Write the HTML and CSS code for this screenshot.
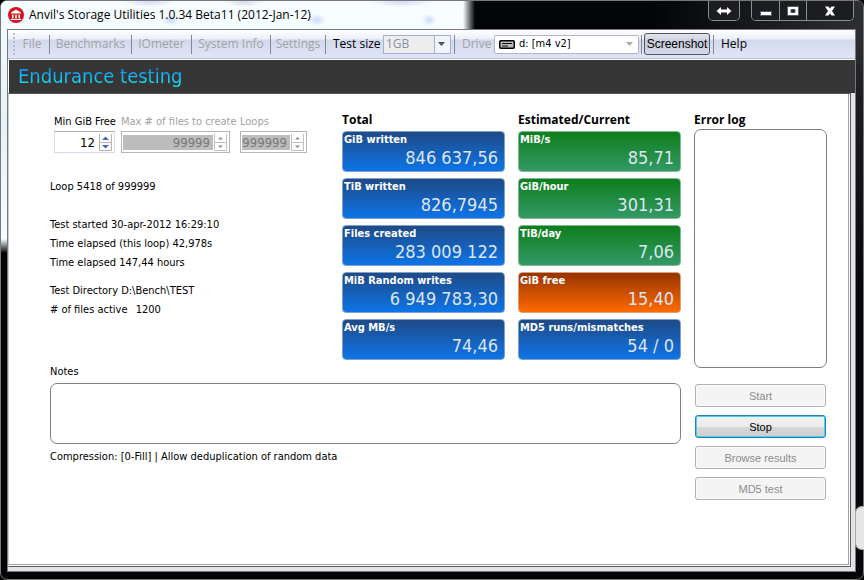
FILE: index.html
```
<!DOCTYPE html>
<html lang="en">
<head>
    <meta charset="UTF-8">
    <meta name="viewport" content="width=device-width, initial-scale=1.0">
    <title>Anvil's Storage Utilities</title>
    <link rel="stylesheet" href="styles.css">
</head>
<body>
    <div class="window">
        <header class="titlebar">
            <svg class="app-icon" width="16" height="16" viewBox="0 0 16 16">
                <circle cx="8" cy="8" r="8" fill="#d8141c"/>
                <path d="M8 2.5L13 5.5V6.5H3V5.5ZM4 7.5H5.5V11H4ZM7.2 7.5H8.8V11H7.2ZM10.5 7.5H12V11H10.5ZM3 11.7H13V13H3Z" fill="#fff"/>
            </svg>
            <h1 class="title">Anvil's Storage Utilities 1.0.34 Beta11 (2012-Jan-12)</h1>
            <div class="caption-group">
                <button class="caption-btn" aria-label="Switch monitor">
                    <svg width="16" height="10" viewBox="0 0 16 10"><path d="M0.5 5L5 1V3.5H11V1L15.5 5L11 9V6.5H5V9Z" fill="#fff"/></svg>
                </button>
            </div>
            <div class="caption-group">
                <button class="caption-btn min" aria-label="Minimize">
                    <svg width="12" height="12" viewBox="0 0 12 12"><path d="M0.5 6.5H11.5V10.5H0.5Z" fill="#fff" stroke="#555a6a"/></svg>
                </button>
                <button class="caption-btn max" aria-label="Maximize">
                    <svg width="12" height="12" viewBox="0 0 12 12"><path d="M0.5 1.5H11.5V10.5H0.5Z" fill="#fff" stroke="#555a6a"/><path d="M4 4.5H8V7.5H4Z" fill="#222" stroke="#555a6a"/></svg>
                </button>
                <button class="caption-btn close" aria-label="Close">
                    <svg width="12" height="12" viewBox="0 0 12 12"><path d="M1 1.5H4.5L6 3.5L7.5 1.5H11L8 6L11 10.5H7.5L6 8.5L4.5 10.5H1L4 6Z" fill="#fff"/></svg>
                </button>
            </div>
        </header>

        <div class="client">
            <nav class="toolbar">
                <span class="grip"></span>
                <button class="menu file" disabled>File</button>
                <button class="menu benchmarks" disabled>Benchmarks</button>
                <button class="menu iometer" disabled>IOmeter</button>
                <button class="menu sysinfo" disabled>System Info</button>
                <button class="menu settings" disabled>Settings</button>
                <div class="tool size-tool">
                    <label for="testSize">Test size</label>
                    <span class="combo combo-size">
                        <select id="testSize" disabled><option>1GB</option></select>
                        <svg class="combo-arrow" width="7" height="4" viewBox="0 0 7 4"><path d="M0 0H7L3.5 4Z" fill="#3d5277"/></svg>
                    </span>
                </div>
                <div class="tool drive-tool">
                    <label for="drive" class="dim">Drive</label>
                    <span class="combo combo-drive">
                        <svg class="drive-icon" width="16" height="9" viewBox="0 0 16 9"><rect x="0.75" y="0.75" width="14.5" height="7.5" rx="1" fill="#bbb" stroke="#000" stroke-width="1.5"/><path d="M3 3.5H13M3 6H9" stroke="#111"/></svg>
                        <select id="drive"><option>d: [m4 v2]</option></select>
                        <svg class="combo-arrow" width="7" height="4" viewBox="0 0 7 4"><path d="M0 0H7L3.5 4Z" fill="#aaa"/></svg>
                    </span>
                </div>
                <div class="tool shot-tool">
                    <button class="shot">Screenshot</button>
                </div>
                <button class="menu help">Help</button>
            </nav>

            <div class="banner"><h2>Endurance testing</h2></div>

            <main class="workspace">
                <div class="main-col">
                    <div class="top-row">
                        <section class="info">
                            <div class="fields">
                                <div class="field field-min">
                                    <label for="minFree">Min GiB Free</label>
                                    <div class="spin">
                                        <input type="number" id="minFree" value="12">
                                        <svg class="arrows" width="13" height="17" viewBox="0 0 13 17"><path d="M0.5 0V16.5H12.5V0M0 8.5H13" fill="none" stroke="#b4b4b4"/><path d="M3 6H10L6.5 2.5ZM3 11H10L6.5 14.5Z" fill="#4a62b8"/></svg>
                                    </div>
                                </div>
                                <div class="field field-max">
                                    <label for="maxFiles" class="dim">Max # of files to create</label>
                                    <div class="spin off">
                                        <input type="number" id="maxFiles" value="99999" disabled>
                                        <svg class="arrows" width="13" height="17" viewBox="0 0 13 17"><path d="M0.5 0V16.5H12.5V0M0 8.5H13" fill="none" stroke="#c0c0c0"/><path d="M4 5.5H9L6.5 3ZM4 11.5H9L6.5 14Z" fill="#8c8c8c"/></svg>
                                    </div>
                                </div>
                                <div class="field field-loops">
                                    <label for="loops" class="dim">Loops</label>
                                    <div class="spin off">
                                        <input type="number" id="loops" value="999999" disabled>
                                        <svg class="arrows" width="13" height="17" viewBox="0 0 13 17"><path d="M0.5 0V16.5H12.5V0M0 8.5H13" fill="none" stroke="#c0c0c0"/><path d="M4 5.5H9L6.5 3ZM4 11.5H9L6.5 14Z" fill="#8c8c8c"/></svg>
                                    </div>
                                </div>
                            </div>
                            <p class="loop">Loop 5418 of 999999</p>
                            <div class="lines">
                                <p>Test started 30-apr-2012 16:29:10</p>
                                <p>Time elapsed (this loop) 42,978s</p>
                                <p>Time elapsed 147,44 hours</p>
                            </div>
                            <div class="lines">
                                <p>Test Directory D:\Bench\TEST</p>
                                <p># of files active <span class="active-count">1200</span></p>
                            </div>
                        </section>

                        <section class="stats">
                            <h3>Total</h3>
                            <div class="tile blue"><span class="name">GiB written</span><span class="value">846 637,56</span></div>
                            <div class="tile blue"><span class="name">TiB written</span><span class="value">826,7945</span></div>
                            <div class="tile blue"><span class="name">Files created</span><span class="value">283 009 122</span></div>
                            <div class="tile blue"><span class="name">MiB Random writes</span><span class="value">6 949 783,30</span></div>
                            <div class="tile blue"><span class="name">Avg MB/s</span><span class="value">74,46</span></div>
                        </section>

                        <section class="stats">
                            <h3>Estimated/Current</h3>
                            <div class="tile green"><span class="name">MiB/s</span><span class="value">85,71</span></div>
                            <div class="tile green"><span class="name">GiB/hour</span><span class="value">301,31</span></div>
                            <div class="tile green"><span class="name">TiB/day</span><span class="value">7,06</span></div>
                            <div class="tile orange"><span class="name">GiB free</span><span class="value">15,40</span></div>
                            <div class="tile blue"><span class="name">MD5 runs/mismatches</span><span class="value">54 / 0</span></div>
                        </section>
                    </div>

                    <label for="notes" class="notes-label">Notes</label>
                    <textarea id="notes" class="notes"></textarea>
                    <p class="compression">Compression: [0-Fill] | Allow deduplication of random data</p>
                </div>

                <aside class="side">
                    <label for="errorLog" class="log-label">Error log</label>
                    <textarea id="errorLog" class="log" readonly></textarea>
                    <div class="actions">
                        <button class="action" disabled>Start</button>
                        <button class="action stop">Stop</button>
                        <button class="action" disabled>Browse results</button>
                        <button class="action" disabled>MD5 test</button>
                    </div>
                </aside>
            </main>
        </div>
        <span class="edge-tab"></span>
    </div>
</body>
</html>
```
FILE: styles.css
```
* {
    margin: 0;
    padding: 0;
    box-sizing: border-box;
}
body {
    font-family: "DejaVu Sans Condensed", "DejaVu Sans", sans-serif;
    font-size: 11px;
    color: #000;
    background: #000;
}
button, input, select, textarea {
    font: inherit;
    color: inherit;
}

/* window frame */
.window {
    position: relative;
    display: flex;
    flex-direction: column;
    min-height: 100vh;
    padding: 0 7px 7px 6px;
    border: 1px solid #777;
    border-radius: 7px;
    background:
        linear-gradient(#f4fdff 0, #e4f2fb 120px, #f4fdff 238px, #030406 252px) left / 6px 100% no-repeat,
        linear-gradient(#34363b, #1b1d20 100px, #050608 300px) right / 8px 100% no-repeat,
        #030406;
}
.titlebar {
    display: flex;
    align-items: flex-start;
    height: 28px;
    margin: 0 -7px 0 -6px;
    padding: 0 9px 0 7px;
    border-radius: 6px 6px 0 0;
    background:
        radial-gradient(ellipse 26px 5px at 148px 1px, #d3dbf5, transparent),
        radial-gradient(ellipse 20px 5px at 243px 1px, #d3dbf5, transparent),
        radial-gradient(ellipse 32px 5px at 400px 1px, #d3dbf5, transparent),
        radial-gradient(ellipse 9px 6px at 170px 19px, #cdd8f6, transparent),
        radial-gradient(ellipse 9px 6px at 316px 19px, #cdd8f6, transparent),
        radial-gradient(ellipse 7px 6px at 428px 19px, #cdd8f6, transparent),
        linear-gradient(90deg, #f6fdff 0, #f6fdff 462px, #030406 474px, #030406 650px, #2d2f33 100%);
}
.app-icon {
    margin-top: 6px;
}
.title {
    flex: 1;
    margin: 6px 0 0 5px;
    font: 12px/16px "Open Sans", sans-serif;
    white-space: nowrap;
}
.caption-group {
    display: flex;
    height: 20px;
    margin-left: 11px;
    border: 1px solid #8b8d91;
    border-top: none;
    border-radius: 0 0 5px 5px;
}
.caption-btn {
    display: flex;
    align-items: center;
    justify-content: center;
    width: 30px;
    border: none;
    background: #1c1d20;
}
.caption-btn + .caption-btn {
    border-left: 1px solid #8b8d91;
}
.caption-btn:first-child {
    border-bottom-left-radius: 4px;
}
.caption-btn:last-child {
    border-bottom-right-radius: 4px;
}
.caption-btn.min, .caption-btn.max {
    width: 27px;
}
.caption-btn.close {
    width: 47px;
}

.client {
    flex: 1;
    display: flex;
    flex-direction: column;
    border: 1px solid #77797c;
    background: #e4e4e6;
}

/* toolbar */
.toolbar {
    display: flex;
    align-items: center;
    height: 29px;
    padding-left: 5px;
    border-bottom: 1px solid #b8bcc8;
    background: linear-gradient(#fff 0, #eceff8 9px, #d3d9ed 10px, #e0e5f6 100%);
    font: 12px/16px "Open Sans", sans-serif;
    white-space: nowrap;
}
.grip {
    width: 2px;
    height: 22px;
    background: repeating-linear-gradient(#b9bcc8 0, #b9bcc8 2px, transparent 2px, transparent 4px);
}
.menu {
    height: 19px;
    border: none;
    background: none;
    text-align: center;
}
.menu:disabled, .dim {
    color: #a2a2a2;
}
.file { width: 34px; }
.benchmarks { width: 82px; }
.iometer { width: 60px; }
.sysinfo { width: 79px; }
.settings { width: 55px; }
.help { width: 41px; }
.menu + .menu, .tool, .help {
    border-left: 1px solid #85878f;
}
.tool {
    display: flex;
    align-items: center;
    height: 19px;
    padding-left: 7px;
}
.size-tool { width: 129px; }
.drive-tool { width: 187px; }
.shot-tool {
    width: 72px;
    padding-left: 2px;
}
.tool label {
    flex: 1;
}
.combo {
    position: relative;
    display: flex;
    align-items: center;
    height: 19px;
    border: 1px solid #b3b7c0;
    background: #fff;
}
.combo select {
    width: 100%;
    height: 100%;
    border: none;
    background: none;
    appearance: none;
    opacity: 1;
    outline: none;
}
.combo-size {
    width: 68px;
    margin-right: 3px;
    border-color: #9fb3cf;
    background: linear-gradient(90deg, #ededed 50px, #9fb3cf 50px, #9fb3cf 51px, #f2f4fa 51px);
}
.combo-size select {
    padding-left: 2px;
    color: #8792a2;
}
.combo-drive {
    width: 145px;
    margin-right: 2px;
    border-radius: 2px;
    font: 11px/16px "DejaVu Sans Condensed", sans-serif;
}
.combo-drive select {
    padding-left: 24px;
}
.combo-arrow {
    position: absolute;
    right: 5px;
    pointer-events: none;
}
.drive-icon {
    position: absolute;
    left: 4px;
    pointer-events: none;
}
.shot {
    width: 66px;
    height: 22px;
    flex: none;
    border: 1px solid #50545c;
    border-radius: 3px;
    background: linear-gradient(#e3e5ea, #c6cbdb 45%, #d4daeb);
    font-family: "Liberation Sans", sans-serif;
    font-size: 12px;
}

.banner {
    height: 34px;
    padding-left: 9px;
    border-top: 1px solid #fff;
    border-left: 1px solid #fff;
    background: #363636;
}
.banner h2 {
    display: inline-block;
    font-size: 20px;
    font-weight: normal;
    line-height: 33px;
    color: transparent;
    background: linear-gradient(#1478f0 5px, #12e6f4 25px);
    -webkit-background-clip: text;
    background-clip: text;
}

/* workspace */
.workspace {
    flex: 1;
    display: flex;
    gap: 13px;
    margin: 0 4px 4px 0;
    padding: 18px 23px 40px 41px;
    border: 1px solid #5a5a5a;
    border-left-color: #ccc;
    background: #fff;
    box-shadow: inset -1px -1px #fff, inset -2px -2px #a0a0a0;
}
.main-col {
    flex: 1;
    display: flex;
    flex-direction: column;
}
.top-row {
    display: flex;
    gap: 13px;
}
.info {
    flex: 1;
    line-height: 19px;
    white-space: nowrap;
}
.fields {
    display: flex;
    gap: 6px;
    padding-left: 4px;
}
.field label {
    display: block;
}
.field-min { width: 61px; }
.field-max { width: 113px; }
.field-max .spin { width: 109px; }
.field-loops { width: 67px; }
.spin {
    display: flex;
    align-items: center;
    height: 22px;
    padding: 0 2px 0 1px;
    border: 1px solid #d5dbe8;
    border-top-color: #aaadb5;
}
.spin input {
    flex: 1;
    min-width: 0;
    height: 15px;
    padding-right: 3px;
    border: none;
    outline: none;
    background: none;
    text-align: right;
    font-size: 13px;
    appearance: textfield;
}
.spin input::-webkit-inner-spin-button {
    display: none;
}
.spin.off {
    border-color: #b6b6b6;
}
.off input {
    background: #bcbcbc;
    color: #777;
}
.arrows {
    margin-left: 1px;
}
.loop {
    margin: 24px 0 19px;
}
.lines {
    margin-bottom: 9px;
}
.active-count {
    margin-left: 5px;
}
.stats {
    width: 163px;
}
h3, .log-label {
    display: block;
    height: 19px;
    font: bold 12px/16px "Open Sans", sans-serif;
}
.tile {
    display: flex;
    flex-direction: column;
    height: 41px;
    margin-bottom: 6px;
    padding: 1px 6px 0 1px;
    border: 1px solid #7fa0c8;
    border-radius: 4px;
    color: #fff;
}
.tile:last-child {
    margin-bottom: 0;
}
.blue { background: linear-gradient(#1f4a86, #0d74e8); }
.green {
    border-color: #82b896;
    background: linear-gradient(#0e7e1c, #339966);
}
.orange {
    border-color: #dba079;
    background: linear-gradient(#963400, #ff6a00);
}
.name {
    font-weight: bold;
    line-height: 13px;
}
.value {
    font-size: 18px;
    line-height: 24px;
    text-align: right;
    color: #dce6f2;
}
.notes-label {
    margin-top: 4px;
    line-height: 16px;
}
.notes, .log {
    display: block;
    width: 100%;
    border: 1px solid #808080;
    border-radius: 7px;
    resize: none;
    outline: none;
}
.notes {
    height: 61px;
    margin: 3px 0 5px;
}
.compression {
    line-height: 16px;
}
.side {
    width: 133px;
}
.log-label {
    height: 17px;
}
.log {
    height: 239px;
}
.actions {
    display: flex;
    flex-direction: column;
    gap: 8px;
    margin: 16px 1px 0;
}
.action {
    height: 23px;
    border: 1px solid #adb2b5;
    border-radius: 3px;
    background: #f4f4f4;
    box-shadow: inset 0 0 0 1px #fcfcfc;
    font: 11px/16px "Liberation Sans", sans-serif;
}
.action:disabled {
    color: #8c8c8c;
}
.action.stop {
    border-color: #2b7fb0;
    background: linear-gradient(#f2f2f2, #ebebeb 50%, #d8d8d8 51%, #cfcfcf);
    box-shadow: inset 0 0 0 1px #45d0fa;
}
.edge-tab {
    position: absolute;
    right: -1px;
    bottom: 29px;
    width: 9px;
    height: 44px;
    border: 1px solid #aaa;
    border-right: none;
    border-radius: 7px 0 0 7px;
    background: #e6e6e6;
}
```
